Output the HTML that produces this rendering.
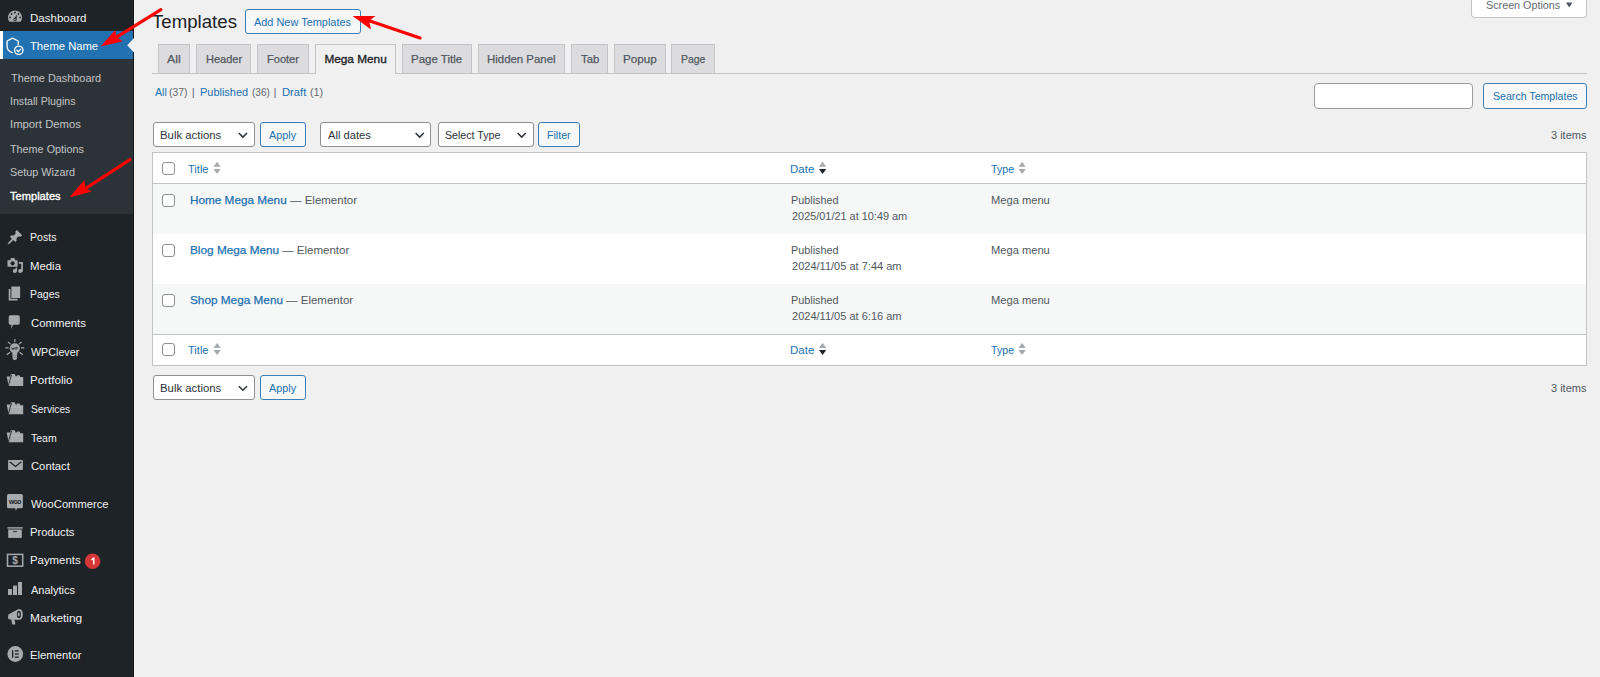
<!DOCTYPE html><html><head><meta charset="utf-8"><style>
html,body{margin:0;padding:0;}
body{width:1600px;height:677px;overflow:hidden;background:#f0f0f1;position:relative;font-family:"Liberation Sans",sans-serif;}
.t{position:absolute;line-height:1;white-space:nowrap;transform-origin:0 0;}
.r{position:absolute;box-sizing:border-box;}
svg{position:absolute;overflow:visible;}
</style></head><body><div class="r" style="left:0px;top:0px;width:133.00px;height:677.00px;background:#1d2327"></div>
<div class="r" style="left:0px;top:59px;width:133.00px;height:154.50px;background:#2c3338"></div>
<div class="r" style="left:0px;top:30.6px;width:133.00px;height:28.40px;background:#2271b1"></div>
<div class="r" style="left:0px;top:30.6px;width:3.00px;height:28.40px;background:#fff"></div>
<div class="r" style="left:133px;top:0px;width:1.00px;height:677.00px;background:#15191c"></div>
<svg style="left:0;top:0" width="1" height="1"><polygon points="134,38 127.2,45.2 134,52.4" fill="#f0f0f1"/></svg>
<svg style="left:0;top:0" width="1" height="1"><path d="M9.3,21.8 A7.1,7.1 0 1 1 20.7,21.8 Z" fill="#a7aaad"/><circle cx="15" cy="12.5" r="0.9" fill="#1d2327"/><circle cx="11.6" cy="14" r="0.9" fill="#1d2327"/><circle cx="18.4" cy="14" r="0.9" fill="#1d2327"/><circle cx="9.9" cy="17.4" r="0.9" fill="#1d2327"/><circle cx="20.1" cy="17.4" r="0.9" fill="#1d2327"/><path d="M13.6,19.3 L17.0,14.6 L16.4,20.2 Z" fill="#1d2327"/><circle cx="15" cy="19.6" r="1.6" fill="#1d2327"/><circle cx="15" cy="19.6" r="0.8" fill="#a7aaad"/><path d="M18.2,44.3 L18.2,41 L12.5,38.2 L7.1,41 L7.1,46.5 Q7.1,50.6 12.2,52.6" fill="none" stroke="#fff" stroke-width="1.3" stroke-linecap="round" stroke-linejoin="round"/><circle cx="18.8" cy="50.3" r="4.2" fill="none" stroke="#fff" stroke-width="1.3"/><path d="M16.9,50.3 L18.3,51.7 L20.8,49.1" fill="none" stroke="#fff" stroke-width="1.3" stroke-linecap="round" stroke-linejoin="round"/><g transform="translate(6.5,228.9) scale(0.84)"><path d="M10.44 3.02l1.82-1.82 6.36 6.35-1.83 1.82c-1.05-.68-2.48-.57-3.41.36l-.75.75c-.92.93-1.04 2.35-.35 3.41l-1.830 1.82-2.41-2.41-2.8 2.79c-.42.42-3.38 2.71-3.8 2.29s1.86-3.39 2.28-3.81l2.79-2.79L4.1 9.36l1.83-1.82c1.05.69 2.48.57 3.4-.36l.75-.75c.93-.92 1.05-2.35.36-3.41z" fill="#a7aaad"/></g><g fill="#a7aaad"><path d="M7.5,260.3 L10.2,260.3 L10.9,258.1 L14.5,258.1 L15.2,260.3 L17.6,260.3 L17.6,266.8 L7.5,266.8 Z" /><circle cx="12.6" cy="263.3" r="2.1" fill="#1d2327"/><rect x="21.2" y="262" width="1.7" height="9.6"/><rect x="18.8" y="262" width="4.1" height="1.8"/><circle cx="20.2" cy="271" r="2"/><rect x="15.5" y="267.6" width="1.6" height="3.8"/><circle cx="14.8" cy="271" r="2"/></g><g transform="translate(6.06,284.7) scale(0.88)"><path d="M6 15V2h10v13H6zm-1 1h8v2H3V5h2v11z" fill="#a7aaad"/></g><g transform="translate(6.15,313.6) scale(0.85)"><path d="M5 2h9c1.1 0 2 .9 2 2v7c0 1.1-.9 2-2 2h-6l-2 5v-5H5c-1.1 0-2-.9-2-2V4c0-1.1.9-2 2-2z" fill="#a7aaad"/></g><g stroke="#a7aaad" stroke-width="1.2" stroke-linecap="round"><line x1="14.8" y1="339.6" x2="14.8" y2="341.6"/><line x1="8.3" y1="342.3" x2="10.3" y2="343.9"/><line x1="21.3" y1="342.3" x2="19.3" y2="343.9"/><line x1="5.8" y1="347.9" x2="8.1" y2="347.9"/><line x1="21.5" y1="347.9" x2="23.8" y2="347.9"/><line x1="7.1" y1="354.5" x2="9.7" y2="352.6"/><line x1="22.5" y1="354.5" x2="19.9" y2="352.6"/></g><circle cx="14.8" cy="348.3" r="5.1" fill="#a7aaad"/><path d="M12.2,352.4 L17.4,352.4 L16.9,359 Q14.8,361.3 12.7,359 Z" fill="#a7aaad"/><path d="M11.5,347.3 l0.8,2.3 l0.8,-1.7 l0.8,1.7 l0.8,-2.3 M15.8,349.6 v-2.3 h1.1 a0.75,0.75 0 0 1 0,1.5 h-1.1" fill="none" stroke="#1d2327" stroke-width="0.7"/><line x1="12.6" y1="355.4" x2="17" y2="355.4" stroke="#7d8185" stroke-width="0.6"/><line x1="12.8" y1="357.4" x2="16.8" y2="357.4" stroke="#7d8185" stroke-width="0.6"/><g transform="translate(0,0.0)"><path d="M6.7,376.4 L10.2,376.4 L11,374 L14.8,374 L15.6,376.2 L16.6,376.2 L17.2,375.3 L19.6,375.3 L20.3,377 L23.2,377 L23.2,386 L8.6,386 Z" fill="#a7aaad"/><path d="M11.6,374.8 Q10.2,378.5 8.4,385.8" fill="none" stroke="#1d2327" stroke-width="0.9"/><rect x="11.2" y="378.6" width="11.2" height="0.8" fill="#c9cccf" opacity="0.6"/></g><g transform="translate(0,28.19999999999999)"><path d="M6.7,376.4 L10.2,376.4 L11,374 L14.8,374 L15.6,376.2 L16.6,376.2 L17.2,375.3 L19.6,375.3 L20.3,377 L23.2,377 L23.2,386 L8.6,386 Z" fill="#a7aaad"/><path d="M11.6,374.8 Q10.2,378.5 8.4,385.8" fill="none" stroke="#1d2327" stroke-width="0.9"/><rect x="11.2" y="378.6" width="11.2" height="0.8" fill="#c9cccf" opacity="0.6"/></g><g transform="translate(0,56.19999999999999)"><path d="M6.7,376.4 L10.2,376.4 L11,374 L14.8,374 L15.6,376.2 L16.6,376.2 L17.2,375.3 L19.6,375.3 L20.3,377 L23.2,377 L23.2,386 L8.6,386 Z" fill="#a7aaad"/><path d="M11.6,374.8 Q10.2,378.5 8.4,385.8" fill="none" stroke="#1d2327" stroke-width="0.9"/><rect x="11.2" y="378.6" width="11.2" height="0.8" fill="#c9cccf" opacity="0.6"/></g><rect x="8.1" y="460" width="14.8" height="10" rx="0.8" fill="#a7aaad"/><path d="M9.6,461.8 L15.5,466.4 L21.4,461.8" fill="none" stroke="#1d2327" stroke-width="1.2"/><path d="M8.6,494.1 H21.3 A1.6,1.6 0 0 1 22.9,495.7 V506.7 A1.6,1.6 0 0 1 21.3,508.3 H17.2 L15.8,510.7 L15.2,508.3 H8.6 A1.6,1.6 0 0 1 7,506.7 V495.7 A1.6,1.6 0 0 1 8.6,494.1 Z" fill="#a7aaad"/><text x="14.9" y="504" font-family="Liberation Sans" font-weight="700" font-size="6.6" fill="#1d2327" text-anchor="middle" letter-spacing="-0.4">woo</text><rect x="7.3" y="527.2" width="15.4" height="1.4" fill="#a7aaad"/><rect x="8.2" y="529.5" width="13.6" height="8.4" fill="#a7aaad"/><rect x="13" y="531.2" width="4" height="0.9" fill="#1d2327"/><rect x="7.5" y="554.4" width="15.2" height="11.8" fill="none" stroke="#a7aaad" stroke-width="1.5"/><text x="15" y="563.6" font-family="Liberation Sans" font-size="10" font-weight="700" fill="#a7aaad" text-anchor="middle">$</text><rect x="8" y="589" width="4" height="6" fill="#a7aaad"/><rect x="13" y="585.6" width="4" height="9.4" fill="#a7aaad"/><rect x="18" y="582" width="4" height="13" fill="#a7aaad"/><path d="M8.4,614.4 Q7.5,616.9 8.5,619.3 L18.5,619.9 L18.5,609 Z" fill="#a7aaad"/><path d="M11.1,619 L14.6,619.4 L15.4,624.4 L12.3,624.6 Z" fill="#a7aaad"/><ellipse cx="19.5" cy="614.4" rx="3.3" ry="5.4" fill="#a7aaad"/><ellipse cx="18.9" cy="614.4" rx="2" ry="3.6" fill="#1d2327"/><ellipse cx="18.7" cy="614.4" rx="1" ry="1.8" fill="#a7aaad"/><circle cx="15.3" cy="654" r="7.9" fill="#a7aaad"/><rect x="12" y="650.2" width="1.3" height="7.6" fill="#1d2327"/><rect x="14.9" y="650.2" width="3.8" height="1.3" fill="#1d2327"/><rect x="14.9" y="653.4" width="3.8" height="1.3" fill="#1d2327"/><rect x="14.9" y="656.5" width="3.8" height="1.3" fill="#1d2327"/><circle cx="92.6" cy="561.2" r="7.8" fill="#d63638"/><path d="M91.2,559.3 L93.1,557.6 L94.5,557.6 L94.5,564.4 L93.1,564.4 L93.1,559.9 L91.8,560.6 Z" fill="#fff"/></svg>
<div class="r" style="left:245px;top:9px;width:116.00px;height:25.00px;background:#f6f7f7;border:1px solid #3b7fba;border-radius:3px"></div>
<div class="r" style="left:1471px;top:-5px;width:116.00px;height:23.00px;background:#fff;border:1px solid #c3c4c7;border-top:none;border-radius:0 0 4px 4px"></div>
<svg style="left:0;top:0" width="1" height="1"><polygon points="1566,2.6 1572.4,2.6 1569.2,7.4" fill="#50575e"/></svg>
<div class="r" style="left:152px;top:73px;width:1434.50px;height:1.00px;background:#c3c4c7"></div>
<div class="r" style="left:158.1px;top:44.3px;width:31.90px;height:28.70px;background:#dcdcde;border:1px solid #c3c4c7;border-bottom:none"></div>
<div class="r" style="left:196.2px;top:44.3px;width:54.80px;height:28.70px;background:#dcdcde;border:1px solid #c3c4c7;border-bottom:none"></div>
<div class="r" style="left:257.1px;top:44.3px;width:51.60px;height:28.70px;background:#dcdcde;border:1px solid #c3c4c7;border-bottom:none"></div>
<div class="r" style="left:315.3px;top:44.3px;width:80.40px;height:29.70px;background:#f0f0f1;border:1px solid #c3c4c7;border-bottom:none"></div>
<div class="r" style="left:402.2px;top:44.3px;width:69.50px;height:28.70px;background:#dcdcde;border:1px solid #c3c4c7;border-bottom:none"></div>
<div class="r" style="left:478.1px;top:44.3px;width:87.10px;height:28.70px;background:#dcdcde;border:1px solid #c3c4c7;border-bottom:none"></div>
<div class="r" style="left:571.4px;top:44.3px;width:36.50px;height:28.70px;background:#dcdcde;border:1px solid #c3c4c7;border-bottom:none"></div>
<div class="r" style="left:614px;top:44.3px;width:51.60px;height:28.70px;background:#dcdcde;border:1px solid #c3c4c7;border-bottom:none"></div>
<div class="r" style="left:671.4px;top:44.3px;width:43.30px;height:28.70px;background:#dcdcde;border:1px solid #c3c4c7;border-bottom:none"></div>
<div class="r" style="left:1314px;top:83px;width:159.00px;height:26.00px;background:#fff;border:1px solid #9a9da1;border-radius:4px"></div>
<div class="r" style="left:1483px;top:83px;width:104.00px;height:26.00px;background:#f6f7f7;border:1px solid #3b7fba;border-radius:3px"></div>
<div class="r" style="left:153px;top:122px;width:101.70px;height:24.60px;background:#fff;border:1px solid #8c8f94;border-radius:3px"></div>
<svg style="left:0;top:0" width="1" height="1"><polyline points="238.79999999999998,133.00000000000003 242.89999999999998,137.10000000000002 246.99999999999997,133.00000000000003" fill="none" stroke="#2c3338" stroke-width="1.5"/></svg>
<div class="r" style="left:260px;top:122px;width:45.60px;height:24.60px;background:#f6f7f7;border:1px solid #3b7fba;border-radius:3px"></div>
<div class="r" style="left:153px;top:375.2px;width:101.70px;height:24.60px;background:#fff;border:1px solid #8c8f94;border-radius:3px"></div>
<svg style="left:0;top:0" width="1" height="1"><polyline points="238.79999999999998,386.2 242.89999999999998,390.29999999999995 246.99999999999997,386.2" fill="none" stroke="#2c3338" stroke-width="1.5"/></svg>
<div class="r" style="left:260px;top:375.2px;width:45.60px;height:24.60px;background:#f6f7f7;border:1px solid #3b7fba;border-radius:3px"></div>
<div class="r" style="left:320.3px;top:122px;width:111.20px;height:24.60px;background:#fff;border:1px solid #8c8f94;border-radius:3px"></div>
<svg style="left:0;top:0" width="1" height="1"><polyline points="415.59999999999997,133.00000000000003 419.7,137.10000000000002 423.8,133.00000000000003" fill="none" stroke="#2c3338" stroke-width="1.5"/></svg>
<div class="r" style="left:437.5px;top:122px;width:96.00px;height:24.60px;background:#fff;border:1px solid #8c8f94;border-radius:3px"></div>
<svg style="left:0;top:0" width="1" height="1"><polyline points="517.6,133.00000000000003 521.7,137.10000000000002 525.8000000000001,133.00000000000003" fill="none" stroke="#2c3338" stroke-width="1.5"/></svg>
<div class="r" style="left:538.4px;top:122px;width:42.00px;height:24.60px;background:#f6f7f7;border:1px solid #3b7fba;border-radius:3px"></div>
<div class="r" style="left:152px;top:152px;width:1435.00px;height:214.00px;background:#fff;border:1px solid #c3c4c7"></div>
<div class="r" style="left:153px;top:183px;width:1433.00px;height:1.00px;background:#c3c4c7"></div>
<div class="r" style="left:153px;top:334px;width:1433.00px;height:1.00px;background:#c3c4c7"></div>
<div class="r" style="left:153px;top:184px;width:1433.00px;height:50.00px;background:#f6f7f7"></div>
<div class="r" style="left:153px;top:284px;width:1433.00px;height:50.00px;background:#f6f7f7"></div>
<div class="r" style="left:162px;top:161.89999999999998px;width:13.00px;height:13.20px;background:#fff;border:1px solid #8c8f94;border-radius:3px"></div>
<svg style="left:0;top:0" width="1" height="1"><polygon points="213.5,166.79999999999998 217.1,161.79999999999998 220.7,166.79999999999998" fill="#a7aaad"/><polygon points="213.5,168.89999999999998 217.1,173.89999999999998 220.7,168.89999999999998" fill="#a7aaad"/></svg>
<svg style="left:0;top:0" width="1" height="1"><polygon points="819,166.79999999999998 822.6,161.79999999999998 826.2,166.79999999999998" fill="#a7aaad"/><polygon points="819,168.89999999999998 822.6,173.89999999999998 826.2,168.89999999999998" fill="#1d2327"/></svg>
<svg style="left:0;top:0" width="1" height="1"><polygon points="1018.5,166.79999999999998 1022.1,161.79999999999998 1025.7,166.79999999999998" fill="#a7aaad"/><polygon points="1018.5,168.89999999999998 1022.1,173.89999999999998 1025.7,168.89999999999998" fill="#a7aaad"/></svg>
<div class="r" style="left:162px;top:343.09999999999997px;width:13.00px;height:13.20px;background:#fff;border:1px solid #8c8f94;border-radius:3px"></div>
<svg style="left:0;top:0" width="1" height="1"><polygon points="213.5,348.0 217.1,343.0 220.7,348.0" fill="#a7aaad"/><polygon points="213.5,350.1 217.1,355.1 220.7,350.1" fill="#a7aaad"/></svg>
<svg style="left:0;top:0" width="1" height="1"><polygon points="819,348.0 822.6,343.0 826.2,348.0" fill="#a7aaad"/><polygon points="819,350.1 822.6,355.1 826.2,350.1" fill="#1d2327"/></svg>
<svg style="left:0;top:0" width="1" height="1"><polygon points="1018.5,348.0 1022.1,343.0 1025.7,348.0" fill="#a7aaad"/><polygon points="1018.5,350.1 1022.1,355.1 1025.7,350.1" fill="#a7aaad"/></svg>
<div class="r" style="left:162px;top:193.8px;width:13.00px;height:13.20px;background:#fff;border:1px solid #8c8f94;border-radius:3px"></div>
<div class="r" style="left:162px;top:243.8px;width:13.00px;height:13.20px;background:#fff;border:1px solid #8c8f94;border-radius:3px"></div>
<div class="r" style="left:162px;top:293.8px;width:13.00px;height:13.20px;background:#fff;border:1px solid #8c8f94;border-radius:3px"></div>
<div class="t" style="left:29.61px;top:12.38px;font-size:11.6px;color:#f0f0f1;font-weight:400;transform:scaleX(0.9945);">Dashboard</div>
<div class="t" style="left:29.60px;top:39.78px;font-size:11.6px;color:#fff;font-weight:400;transform:scaleX(0.9700);">Theme Name</div>
<div class="t" style="left:10.50px;top:72.55px;font-size:11.4px;color:#c3c4c7;font-weight:400;transform:scaleX(0.9553);">Theme Dashboard</div>
<div class="t" style="left:9.57px;top:95.85px;font-size:11.4px;color:#c3c4c7;font-weight:400;transform:scaleX(0.9319);">Install Plugins</div>
<div class="t" style="left:9.51px;top:119.45px;font-size:11.4px;color:#c3c4c7;font-weight:400;transform:scaleX(0.9914);">Import Demos</div>
<div class="t" style="left:10.30px;top:143.75px;font-size:11.4px;color:#c3c4c7;font-weight:400;transform:scaleX(0.9487);">Theme Options</div>
<div class="t" style="left:10.30px;top:167.25px;font-size:11.4px;color:#c3c4c7;font-weight:400;transform:scaleX(0.9515);">Setup Wizard</div>
<div class="t" style="left:10.30px;top:191.05px;font-size:11.4px;color:#fff;font-weight:400;-webkit-text-stroke:0.35px #fff;transform:scaleX(0.9750);">Templates</div>
<div class="t" style="left:30.09px;top:231.18px;font-size:11.6px;color:#f0f0f1;font-weight:400;transform:scaleX(0.9143);">Posts</div>
<div class="t" style="left:30.02px;top:259.58px;font-size:11.6px;color:#f0f0f1;font-weight:400;transform:scaleX(0.9806);">Media</div>
<div class="t" style="left:30.10px;top:288.48px;font-size:11.6px;color:#f0f0f1;font-weight:400;transform:scaleX(0.9031);">Pages</div>
<div class="t" style="left:31.00px;top:317.38px;font-size:11.6px;color:#f0f0f1;font-weight:400;transform:scaleX(0.9786);">Comments</div>
<div class="t" style="left:31.00px;top:345.78px;font-size:11.6px;color:#f0f0f1;font-weight:400;transform:scaleX(0.9250);">WPClever</div>
<div class="t" style="left:30.00px;top:373.88px;font-size:11.6px;color:#f0f0f1;font-weight:400;">Portfolio</div>
<div class="t" style="left:31.00px;top:402.68px;font-size:11.6px;color:#f0f0f1;font-weight:400;transform:scaleX(0.8818);">Services</div>
<div class="t" style="left:31.00px;top:431.58px;font-size:11.6px;color:#f0f0f1;font-weight:400;transform:scaleX(0.9071);">Team</div>
<div class="t" style="left:31.00px;top:460.08px;font-size:11.6px;color:#f0f0f1;font-weight:400;transform:scaleX(0.9700);">Contact</div>
<div class="t" style="left:31.00px;top:497.68px;font-size:11.6px;color:#f0f0f1;font-weight:400;transform:scaleX(0.9650);">WooCommerce</div>
<div class="t" style="left:30.03px;top:525.88px;font-size:11.6px;color:#f0f0f1;font-weight:400;transform:scaleX(0.9711);">Products</div>
<div class="t" style="left:30.02px;top:554.38px;font-size:11.6px;color:#f0f0f1;font-weight:400;transform:scaleX(0.9820);">Payments</div>
<div class="t" style="left:31.00px;top:583.58px;font-size:11.6px;color:#f0f0f1;font-weight:400;transform:scaleX(0.9500);">Analytics</div>
<div class="t" style="left:29.98px;top:612.08px;font-size:11.6px;color:#f0f0f1;font-weight:400;transform:scaleX(1.0240);">Marketing</div>
<div class="t" style="left:30.03px;top:649.28px;font-size:11.6px;color:#f0f0f1;font-weight:400;transform:scaleX(0.9731);">Elementor</div>
<div class="t" style="left:151.90px;top:13.00px;font-size:18.9px;color:#1d2327;font-weight:400;transform:scaleX(0.9872);">Templates</div>
<div class="t" style="left:254.40px;top:16.75px;font-size:11.4px;color:#2271b1;font-weight:400;transform:scaleX(0.9594);">Add New Templates</div>
<div class="t" style="left:1485.60px;top:-0.18px;font-size:11.2px;color:#646970;font-weight:400;transform:scaleX(0.9623);">Screen Options</div>
<div class="t" style="left:167.00px;top:53.71px;font-size:11.8px;color:#50575e;font-weight:400;-webkit-text-stroke:0.25px #50575e;transform:scaleX(1.0462);">All</div>
<div class="t" style="left:205.60px;top:53.71px;font-size:11.8px;color:#50575e;font-weight:400;-webkit-text-stroke:0.25px #50575e;transform:scaleX(0.9333);">Header</div>
<div class="t" style="left:266.90px;top:53.71px;font-size:11.8px;color:#50575e;font-weight:400;-webkit-text-stroke:0.25px #50575e;transform:scaleX(0.9371);">Footer</div>
<div class="t" style="left:324.40px;top:53.71px;font-size:11.8px;color:#1d2327;font-weight:400;-webkit-text-stroke:0.35px #1d2327;">Mega Menu</div>
<div class="t" style="left:411.10px;top:53.71px;font-size:11.8px;color:#50575e;font-weight:400;-webkit-text-stroke:0.25px #50575e;transform:scaleX(0.9736);">Page Title</div>
<div class="t" style="left:487.20px;top:53.71px;font-size:11.8px;color:#50575e;font-weight:400;-webkit-text-stroke:0.25px #50575e;transform:scaleX(0.9676);">Hidden Panel</div>
<div class="t" style="left:580.60px;top:53.71px;font-size:11.8px;color:#50575e;font-weight:400;-webkit-text-stroke:0.25px #50575e;transform:scaleX(0.9579);">Tab</div>
<div class="t" style="left:622.90px;top:53.71px;font-size:11.8px;color:#50575e;font-weight:400;-webkit-text-stroke:0.25px #50575e;transform:scaleX(0.9912);">Popup</div>
<div class="t" style="left:680.70px;top:53.71px;font-size:11.8px;color:#50575e;font-weight:400;-webkit-text-stroke:0.25px #50575e;transform:scaleX(0.8821);">Page</div>
<div class="t" style="left:154.75px;top:86.73px;font-size:11.3px;color:#2271b1;font-weight:400;transform:scaleX(0.9375);">All</div>
<div class="t" style="left:169.40px;top:86.73px;font-size:11.3px;color:#646970;font-weight:400;transform:scaleX(0.9200);">(37)</div>
<div class="t" style="left:191.80px;top:86.73px;font-size:11.3px;color:#646970;font-weight:400;">|</div>
<div class="t" style="left:200.33px;top:86.73px;font-size:11.3px;color:#2271b1;font-weight:400;transform:scaleX(0.9688);">Published</div>
<div class="t" style="left:251.50px;top:86.73px;font-size:11.3px;color:#646970;font-weight:400;transform:scaleX(0.8900);">(36)</div>
<div class="t" style="left:273.40px;top:86.73px;font-size:11.3px;color:#646970;font-weight:400;">|</div>
<div class="t" style="left:282.41px;top:86.73px;font-size:11.3px;color:#2271b1;font-weight:400;transform:scaleX(0.9917);">Draft</div>
<div class="t" style="left:310.40px;top:86.73px;font-size:11.3px;color:#646970;font-weight:400;transform:scaleX(0.9538);">(1)</div>
<div class="t" style="left:1492.80px;top:91.12px;font-size:11.2px;color:#2271b1;font-weight:400;transform:scaleX(0.9472);">Search Templates</div>
<div class="t" style="left:159.73px;top:129.00px;font-size:11.7px;color:#2c3338;font-weight:400;transform:scaleX(0.9726);">Bulk actions</div>
<div class="t" style="left:268.70px;top:129.00px;font-size:11.7px;color:#2271b1;font-weight:400;transform:scaleX(0.9300);">Apply</div>
<div class="t" style="left:1550.60px;top:129.93px;font-size:11.3px;color:#50575e;font-weight:400;transform:scaleX(0.9722);">3 items</div>
<div class="t" style="left:159.73px;top:382.20px;font-size:11.7px;color:#2c3338;font-weight:400;transform:scaleX(0.9726);">Bulk actions</div>
<div class="t" style="left:268.70px;top:382.20px;font-size:11.7px;color:#2271b1;font-weight:400;transform:scaleX(0.9300);">Apply</div>
<div class="t" style="left:1550.60px;top:383.13px;font-size:11.3px;color:#50575e;font-weight:400;transform:scaleX(0.9722);">3 items</div>
<div class="t" style="left:327.60px;top:129.10px;font-size:11.7px;color:#2c3338;font-weight:400;transform:scaleX(0.9578);">All dates</div>
<div class="t" style="left:445.40px;top:129.10px;font-size:11.7px;color:#2c3338;font-weight:400;transform:scaleX(0.9098);">Select Type</div>
<div class="t" style="left:547.15px;top:129.52px;font-size:11.2px;color:#2271b1;font-weight:400;transform:scaleX(0.9500);">Filter</div>
<div class="t" style="left:188.20px;top:163.85px;font-size:11.4px;color:#2271b1;font-weight:400;transform:scaleX(0.9714);">Title</div>
<div class="t" style="left:789.89px;top:163.85px;font-size:11.4px;color:#2271b1;font-weight:400;transform:scaleX(1.0087);">Date</div>
<div class="t" style="left:991.00px;top:163.85px;font-size:11.4px;color:#2271b1;font-weight:400;transform:scaleX(0.9333);">Type</div>
<div class="t" style="left:188.20px;top:345.05px;font-size:11.4px;color:#2271b1;font-weight:400;transform:scaleX(0.9714);">Title</div>
<div class="t" style="left:789.89px;top:345.05px;font-size:11.4px;color:#2271b1;font-weight:400;transform:scaleX(1.0087);">Date</div>
<div class="t" style="left:991.00px;top:345.05px;font-size:11.4px;color:#2271b1;font-weight:400;transform:scaleX(0.9333);">Type</div>
<div class="t" style="left:189.80px;top:194.28px;font-size:11.6px;color:#2271b1;font-weight:400;-webkit-text-stroke:0.25px #2271b1;transform:scaleX(1.0137);">Home Mega Menu</div>
<div class="t" style="left:289.70px;top:194.28px;font-size:11.6px;color:#50575e;font-weight:400;transform:scaleX(0.9912);">— Elementor</div>
<div class="t" style="left:790.63px;top:194.72px;font-size:11.2px;color:#50575e;font-weight:400;transform:scaleX(0.9688);">Published</div>
<div class="t" style="left:791.60px;top:210.92px;font-size:11.2px;color:#50575e;font-weight:400;transform:scaleX(0.9746);">2025/01/21 at 10:49 am</div>
<div class="t" style="left:991.31px;top:194.72px;font-size:11.2px;color:#50575e;font-weight:400;transform:scaleX(0.9948);">Mega menu</div>
<div class="t" style="left:189.80px;top:244.28px;font-size:11.6px;color:#2271b1;font-weight:400;-webkit-text-stroke:0.25px #2271b1;transform:scaleX(1.0172);">Blog Mega Menu</div>
<div class="t" style="left:281.90px;top:244.28px;font-size:11.6px;color:#50575e;font-weight:400;transform:scaleX(0.9941);">— Elementor</div>
<div class="t" style="left:790.63px;top:244.72px;font-size:11.2px;color:#50575e;font-weight:400;transform:scaleX(0.9688);">Published</div>
<div class="t" style="left:791.60px;top:260.92px;font-size:11.2px;color:#50575e;font-weight:400;transform:scaleX(0.9856);">2024/11/05 at 7:44 am</div>
<div class="t" style="left:991.31px;top:244.72px;font-size:11.2px;color:#50575e;font-weight:400;transform:scaleX(0.9948);">Mega menu</div>
<div class="t" style="left:189.80px;top:294.28px;font-size:11.6px;color:#2271b1;font-weight:400;-webkit-text-stroke:0.25px #2271b1;transform:scaleX(1.0159);">Shop Mega Menu</div>
<div class="t" style="left:285.60px;top:294.28px;font-size:11.6px;color:#50575e;font-weight:400;transform:scaleX(0.9926);">— Elementor</div>
<div class="t" style="left:790.63px;top:294.72px;font-size:11.2px;color:#50575e;font-weight:400;transform:scaleX(0.9688);">Published</div>
<div class="t" style="left:791.60px;top:310.92px;font-size:11.2px;color:#50575e;font-weight:400;transform:scaleX(0.9856);">2024/11/05 at 6:16 am</div>
<div class="t" style="left:991.31px;top:294.72px;font-size:11.2px;color:#50575e;font-weight:400;transform:scaleX(0.9948);">Mega menu</div>
<svg style="left:0;top:0" width="1" height="1"><line x1="160.9" y1="9.6" x2="116.6" y2="37.2" stroke="#f00" stroke-width="3.2" stroke-linecap="round"/><polygon points="100.6,46.5 115.2,30.1 116.6,37.2 122.8,41.2" fill="#f00"/></svg>
<svg style="left:0;top:0" width="1" height="1"><line x1="130" y1="159.7" x2="85.5" y2="188.5" stroke="#f00" stroke-width="3.2" stroke-linecap="round"/><polygon points="69.3,197.4 84.4,180.1 85.5,188.5 91.9,191.6" fill="#f00"/></svg>
<svg style="left:0;top:0" width="1" height="1"><line x1="420.1" y1="38" x2="369.2" y2="20.7" stroke="#f00" stroke-width="3.2" stroke-linecap="round"/><polygon points="352.6,15.9 375.5,15.9 369.2,20.7 371,29.5" fill="#f00"/></svg></body></html>
